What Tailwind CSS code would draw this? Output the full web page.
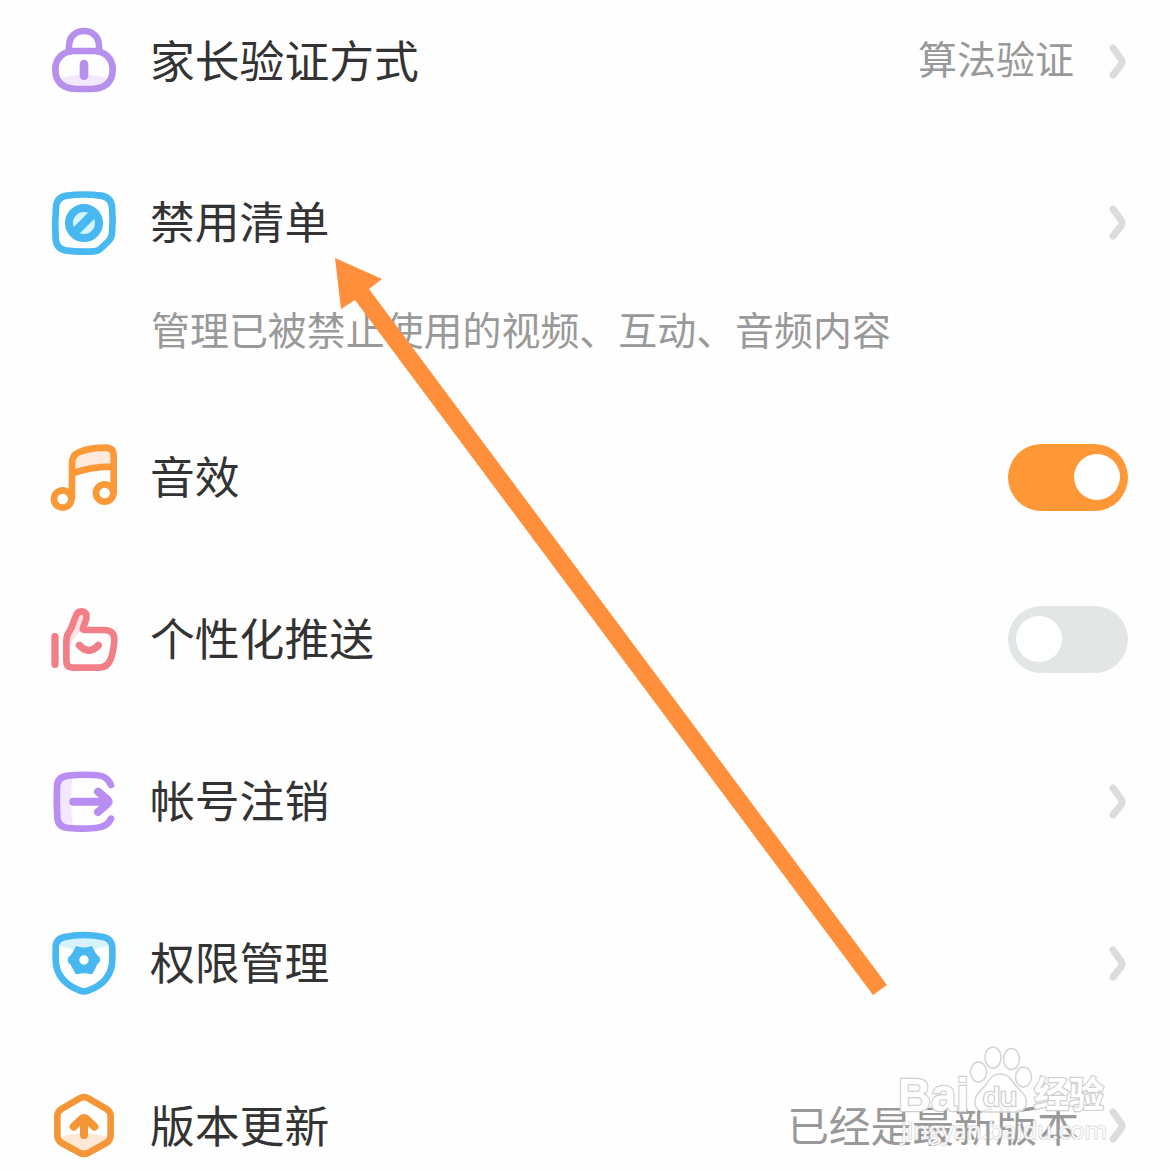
<!DOCTYPE html>
<html lang="zh-CN">
<head>
<meta charset="utf-8">
<title>设置</title>
<script src="https://cdn.jsdelivr.net/npm/@tailwindcss/browser@4"></script>
</head>
<body class="bg-[#fefefe]">
<main class="relative h-[1172px] w-[1172px] overflow-hidden bg-[#fefefe] font-['Noto_Sans_CJK_SC',sans-serif] text-[44.8px] leading-none whitespace-nowrap text-[#333]">
  <section class="flex h-[124px] mb-[18px] items-center pl-10 pr-11">
    <svg class="size-[90px] shrink-0" viewBox="0 6 270 270" fill="none" stroke="#b78fed" stroke-width="20" stroke-linecap="round" stroke-linejoin="round">
      <path d="M55 191Q132 168 209 191Q195 223 156 223H109Q68 220 55 191Z" fill="#f3e9fd" stroke="none"/>
      <path d="M87 110V94C87 66 106 48 132 48S177 66 177 94V110"/>
      <path d="M104 108H160C194 108 218 130 218 163C218 202 195 222 154 222H110C69 222 46 202 46 163C46 130 70 108 104 108Z"/>
      <path d="M132 147V182" stroke-width="26"/>
    </svg>
    <h2 class="ml-5 flex-1 -translate-y-[3.5px]">家长验证方式</h2>
    <span class="mr-[34px] -translate-y-[5px] text-[39px] text-[#999]">算法验证</span>
    <svg class="h-9 w-5 shrink-0" viewBox="0 0 20 36" fill="none" stroke="#dcdcdc" stroke-width="7" stroke-linecap="round" stroke-linejoin="round"><path d="M5 4L13 15Q15 18 13 21L5 31"/></svg>
  </section>
  <section class="flex h-[162px] items-center pl-10 pr-11">
    <svg class="size-[90px] shrink-0" viewBox="0 -6 270 270" fill="none" stroke="#48b8f0" stroke-width="20" stroke-linejoin="round">
      <path d="M81 47Q131 40 182 47Q213 51 216 81Q220 121 216 160Q215 174 206 183L182 206Q174 214 161 214Q119 217 80 212Q49 207 47 177Q44 127 48 80Q51 51 81 47Z"/>
      <circle cx="132" cy="129" r="45" fill="#d2f4fc" stroke-width="24"/>
      <path d="M103 158L161 100" stroke-width="26"/>
    </svg>
    <h2 class="ml-5 flex-1 -translate-y-[3px]">禁用清单</h2>
    <svg class="h-9 w-5 shrink-0" viewBox="0 0 20 36" fill="none" stroke="#dcdcdc" stroke-width="7" stroke-linecap="round" stroke-linejoin="round"><path d="M5 4L13 15Q15 18 13 21L5 31"/></svg>
  </section>
  <p class="mb-9 flex h-14 items-center pb-[7px] pl-[151px] text-[38.950px] text-[#999]">管理已被禁止使用的视频、互动、音频内容</p>
  <section class="flex h-[162px] items-center pl-10 pr-11">
    <svg class="size-[90px] shrink-0" viewBox="0 -9 270 270" fill="none" stroke="#fb9937" stroke-width="20" stroke-linecap="round" stroke-linejoin="round">
      <path d="M98 115V80Q99 58 119 51Q157 37 198 39Q221 40 222 62V98Q160 97 98 115Z" fill="#ffe9dc" stroke="none"/>
      <path d="M96 188V83Q97 58 121 50Q153 38 197 38Q221 39 221 62V174M98 115Q158 94 218 95"/>
      <circle cx="68" cy="192" r="26"/><circle cx="194" cy="174" r="26"/>
    </svg>
    <h2 class="ml-5 flex-1 -translate-y-[2px]">音效</h2>
    <div class="flex h-[67px] w-[120px] items-center justify-end rounded-full bg-[#fe9735] pr-2"><div class="size-[46px] rounded-full bg-white"></div></div>
  </section>
  <section class="flex h-[162px] items-center pl-10 pr-11">
    <svg class="size-[90px] shrink-0" viewBox="0 -3 270 270" fill="none" stroke="#f27f88" stroke-width="20" stroke-linecap="round" stroke-linejoin="round">
      <path d="M81 132L104 65Q108 50 120 49Q138 49 136 72L122 104L87 152Z" fill="#ffe3e4" stroke="none"/>
      <path d="M45 125V208" stroke-width="22"/>
      <path d="M94 99L107 64Q112 48 126 49Q143 53 139 72L129 99Q126 106 137 105H193Q224 105 223 136Q221 170 211 195Q201 217 178 218H98Q78 217 79 196V137Q80 120 87 111Z"/>
      <path d="M118 151Q146 181 175 151" stroke-width="22"/>
    </svg>
    <h2 class="ml-5 flex-1 -translate-y-[2px]">个性化推送</h2>
    <div class="flex h-[67px] w-[120px] items-center rounded-full bg-[#e2e7e6] pl-2"><div class="size-[46px] rounded-full bg-white"></div></div>
  </section>
  <section class="flex h-[163px] items-center pl-10 pr-11">
    <svg class="size-[90px] shrink-0" viewBox="0 0 270 270" fill="none" stroke="#ba8df2" stroke-width="20" stroke-linecap="round" stroke-linejoin="round">
      <path d="M60 61H97Q89 134 99 211H60Z" fill="#f2e8fd" stroke="none"/>
      <path d="M213 84C203 60 187 55 159 54Q120 52 84 56Q52 59 51 90Q49 134 52 181Q53 210 84 213Q126 217 166 213Q202 211 213 185"/>
      <path d="M100 134H202M174 104L202 127Q209 134 202 141L174 165" stroke-width="24"/>
    </svg>
    <h2 class="ml-5 flex-1 -translate-y-[2px]">帐号注销</h2>
    <svg class="h-9 w-5 shrink-0" viewBox="0 0 20 36" fill="none" stroke="#dcdcdc" stroke-width="7" stroke-linecap="round" stroke-linejoin="round"><path d="M5 4L13 15Q15 18 13 21L5 31"/></svg>
  </section>
  <section class="flex h-[162px] items-center pl-10 pr-11">
    <svg class="size-[90px] shrink-0" viewBox="0 -1 270 270" fill="none" stroke="#48b8f0" stroke-width="20" stroke-linejoin="round">
      <path d="M55 55H209V78Q171 91 132 91Q90 91 55 78Z" fill="#d6f3fe" stroke="none"/>
      <path d="M74 53Q132 41 190 53Q216 59 217 84V121C216 169 187 198 144 214Q132 219 120 214C78 198 48 169 47 121V84Q47 59 74 53Z"/>
      <path d="M111 87Q132 94 153 87L160 101Q165 111 174 117L175 123Q164 133 160 147L153 159Q132 153 111 159L104 147Q99 132 89 125L90 117Q99 111 104 101Z" fill="#48b8f0" stroke-width="12"/>
      <circle cx="132" cy="122" r="14" fill="#fff" stroke="none"/>
    </svg>
    <h2 class="ml-5 flex-1 -translate-y-[3px]">权限管理</h2>
    <svg class="h-9 w-5 shrink-0" viewBox="0 0 20 36" fill="none" stroke="#dcdcdc" stroke-width="7" stroke-linecap="round" stroke-linejoin="round"><path d="M5 4L13 15Q15 18 13 21L5 31"/></svg>
  </section>
  <section class="flex h-[162px] items-center pl-10 pr-11">
    <svg class="size-[90px] shrink-0" viewBox="0 -3 270 270" fill="none" stroke="#f49536" stroke-width="20" stroke-linecap="round" stroke-linejoin="round">
      <path d="M53 168Q132 139 211 168V187L132 218L53 187Z" fill="#fee7d5" stroke="none"/>
      <path d="M119 49Q132 42 145 49L198 80Q212 88 212 103V160Q212 175 199 183L146 212Q132 219 118 212L65 183Q52 175 52 160V103Q52 88 66 80Z"/>
      <path d="M132 159V111M101 134L124 112Q132 105 140 112L163 134" stroke-width="24"/>
    </svg>
    <h2 class="ml-5 flex-1 -translate-y-[2px]">版本更新</h2>
    <span class="mr-[29px] -translate-y-px text-[41.700px] text-[#999]">已经是最新版本</span>
    <svg class="h-9 w-5 shrink-0" viewBox="0 0 20 36" fill="none" stroke="#dcdcdc" stroke-width="7" stroke-linecap="round" stroke-linejoin="round"><path d="M5 4L13 15Q15 18 13 21L5 31"/></svg>
  </section>

  <!-- annotation arrow and watermark overlays -->
  <svg class="absolute left-0 top-0" width="1172" height="1172" viewBox="0 0 1172 1172">
    <path d="M335 258L382 279L369 289L887 985L873 995L355 300L341 309Z" fill="#ff8f3a"/>
    <g fill="#fff" fill-opacity=".85" stroke="#d4d4d4" stroke-width="1.500">
      <ellipse cx="978.500" cy="1072" rx="8" ry="10"/>
      <ellipse cx="993" cy="1057.500" rx="8" ry="10.500"/>
      <ellipse cx="1011.500" cy="1059" rx="8" ry="10.500"/>
      <ellipse cx="1023.500" cy="1077" rx="8" ry="10"/>
      <path d="M1000 1074C1010 1074 1012 1082 1017 1087C1024 1094 1028 1098 1026 1106Q1023 1113 1013 1112H987Q976 1112 975 1104C974 1096 979 1092 984 1087C989 1082 990 1074 1000 1074Z"/>
    </g>
    <g fill="#fff" stroke="#d0d0d0" stroke-width="2.400" paint-order="stroke" font-family="Liberation Sans, sans-serif" font-weight="bold">
      <text x="898" y="1111" font-size="47" textLength="71" lengthAdjust="spacingAndGlyphs">Bai</text>
      <text x="983" y="1106" font-size="26" font-weight="normal" textLength="34" lengthAdjust="spacingAndGlyphs">du</text>
      <text x="1034" y="1108" font-size="36" font-family="Noto Sans CJK SC, sans-serif" textLength="70" lengthAdjust="spacingAndGlyphs">经验</text>
    </g>
    <text x="901" y="1139" font-size="24" fill="#fff" fill-opacity=".9" stroke="#ccc" stroke-opacity=".7" stroke-width="1.600" paint-order="stroke" font-family="Open Sans, sans-serif" textLength="206" lengthAdjust="spacingAndGlyphs">jingyan.baidu.com</text>
  </svg>
</main>
</body>
</html>
